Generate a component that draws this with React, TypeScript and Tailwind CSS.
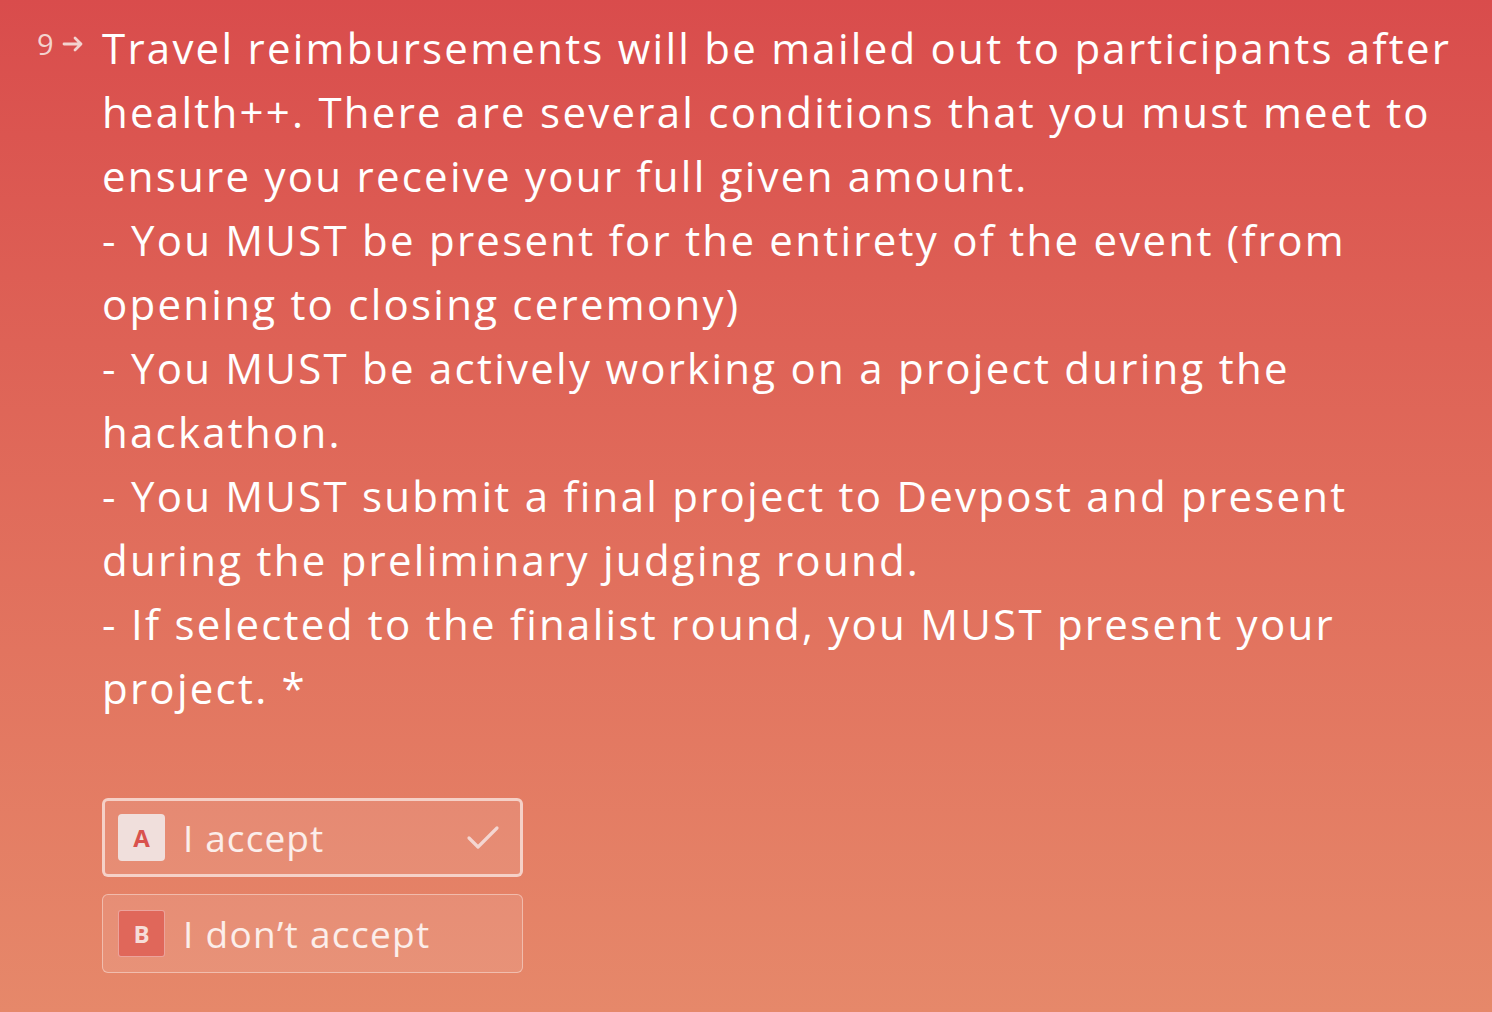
export default function App() {
  const lines = [
    "Travel reimbursements will be mailed out to participants after",
    "health++. There are several conditions that you must meet to",
    "ensure you receive your full given amount.",
    "- You MUST be present for the entirety of the event (from",
    "opening to closing ceremony)",
    "- You MUST be actively working on a project during the",
    "hackathon.",
    "- You MUST submit a final project to Devpost and present",
    "during the preliminary judging round.",
    "- If selected to the finalist round, you MUST present your",
    "project. *",
  ];

  return (
    <div
      className="w-[1492px] h-[1012px] overflow-hidden bg-gradient-to-b from-[#d94c4c] to-[#e6886a] text-white"
      style={{ fontFamily: "'Open Sans', Lato, sans-serif" }}
    >
      <div className="flex pt-[16px]">
        {/* question number */}
        <div className="w-[102px] shrink-0 flex items-start gap-[8px] pl-[37px] pt-[12px] text-[#f3d3cf]">
          <span className="text-[29px] leading-[32px]">9</span>
          <svg width="22" height="16" viewBox="0 0 22 16" className="mt-[8px]">
            <path d="M2 8h17M13 2l6 6-6 6" stroke="currentColor" strokeWidth="2.8" fill="none" strokeLinecap="round" strokeLinejoin="round" />
          </svg>
        </div>

        <div className="flex flex-col">
          <div className="text-[42px] leading-[64px] tracking-[2.25px] whitespace-nowrap">
            {lines.map((l) => (
              <div key={l}>{l}</div>
            ))}
          </div>

          <div className="mt-[78px] flex flex-col gap-[17px] w-[421px]">
            <div className="h-[79px] rounded-[6px] border-[3px] border-white/60 bg-white/10 flex items-center pl-[13px] pr-[20px]">
              <div className="w-[47px] h-[47px] rounded-[4px] bg-[#f0dfdc] flex items-center justify-center text-[#d9524d] text-[24px] font-bold">
                A
              </div>
              <span className="ml-[18px] text-[37px] text-white/85 tracking-[1.1px] flex-1">I accept</span>
              <svg width="34" height="26" viewBox="0 0 34 26">
                <path d="M3 13l9 9L31 3" stroke="#f4d6d1" strokeWidth="3.2" fill="none" strokeLinecap="round" strokeLinejoin="round" />
              </svg>
            </div>
            <div className="h-[79px] rounded-[6px] border border-white/40 bg-white/10 flex items-center pl-[15px]">
              <div className="w-[47px] h-[47px] rounded-[3px] bg-[#e0675a] border border-white/40 flex items-center justify-center text-[#f6ddd8] text-[24px] font-bold">
                B
              </div>
              <span className="ml-[18px] text-[37px] text-white/85 tracking-[1.3px]">I don’t accept</span>
            </div>
          </div>
        </div>
      </div>
    </div>
  );
}
